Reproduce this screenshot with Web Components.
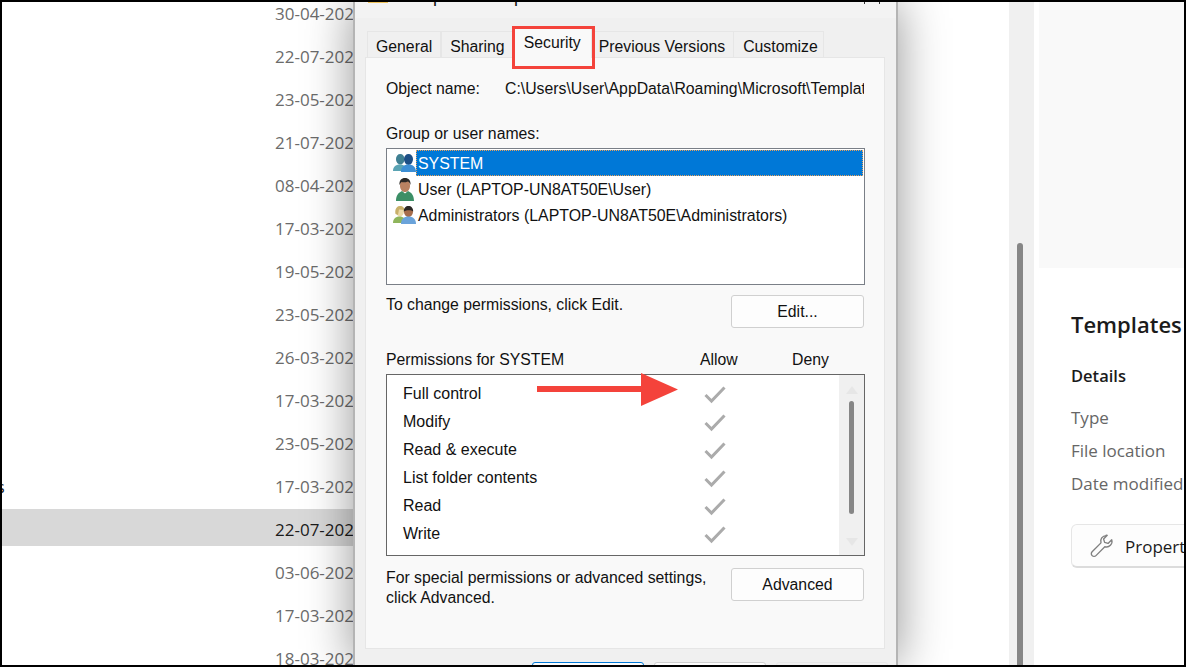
<!DOCTYPE html>
<html>
<head>
<meta charset="utf-8">
<title>Security tab</title>
<style>
  html, body { margin: 0; padding: 0; background: #000; }
</style>
</head>
<body>
<app-frame>
  <file-list slot="list"></file-list>
  <prop-dialog slot="dialog">
    <dlg-tab>General</dlg-tab>
    <dlg-tab>Sharing</dlg-tab>
    <dlg-tab selected>Security</dlg-tab>
    <dlg-tab>Previous Versions</dlg-tab>
    <dlg-tab>Customize</dlg-tab>
  </prop-dialog>
  <details-pane slot="details"></details-pane>
</app-frame>

<script>
const ICONS = {
  system: `<svg width="23" height="18" viewBox="0 0 23 18">
    <path d="M3 5c0-3 1.800-5 4.300-5s4.200 2 4.200 5-1.800 5.500-4.200 5.500S3 8 3 5z" fill="#3f7f92"/>
    <path d="M0 17c0-4 2.500-6.500 7-6.500s6 2.500 6 6.500z" fill="#5aa3b3"/>
    <path d="M11 5c0-3 2-5 4.500-5S20 2 20 5s-2 6-4.500 6S11 8 11 5z" fill="#1d4f86"/>
    <path d="M8 18c0-5 3-7.500 7.500-7.500S23 13 23 18z" fill="#3c8ed4"/></svg>`,
  user: `<svg width="20" height="23" viewBox="0 0 20 23">
    <path d="M5 7.500C5 3.500 7 1 10 1s5 2.500 5 6.500S13 14 10 14s-5-2.500-5-6.500z" fill="#b98262"/>
    <path d="M4.500 7C4 2.500 6.500 0 10 0s6 2.500 5.500 7c-.5-2-1.500-3-2.500-3.500-2 1-5.500 1-6.500.5C5.500 5 5 6 4.500 7z" fill="#2b2826"/>
    <path d="M1 23c0-5.500 2.500-8.500 6-10l3 2.500 3-2.500c3.500 1.500 6 4.500 6 10z" fill="#3c8f66"/></svg>`,
  admins: `<svg width="23" height="18" viewBox="0 0 23 18">
    <path d="M3 5c0-3 1.800-5 4-5s4 2 4 5-1.800 5.500-4 5.500S3 8 3 5z" fill="#ecd9a8"/>
    <path d="M2.500 8C1.500 3 4 0 7 0s4.500 2 4.500 4L6 3.500 5 9z" fill="#c8b06a"/>
    <path d="M0 17c0-4 2.500-6.500 6.500-6.500S13 13 13 17z" fill="#8fb55c"/>
    <path d="M11 5.500c0-3 2-5 4.500-5S20 2.500 20 5.500s-2 5.500-4.500 5.500S11 8.500 11 5.500z" fill="#a66c4a"/>
    <path d="M10.800 5.500c0-3.500 2-5.500 4.700-5.500s4.700 2 4.700 5.500c-2-1.800-6.500-1.800-9.400 0z" fill="#2b2826"/>
    <path d="M8 18c0-5 3-7.500 7.500-7.500S23 13 23 18z" fill="#6aa3da"/></svg>`
}

// top level frame, the black edge of the screenshot
class AppFrame extends HTMLElement {
  constructor() {
    super()
    this.attachShadow({ mode: 'open' })
  }
  connectedCallback() {
    this.shadowRoot.innerHTML = `
      <style>
        :host {
          display: grid;
          grid-template-columns: 351px 545px 111px 25px 1fr;
          grid-template-rows: 663px;
          box-sizing: border-box;
          width: 1186px;
          height: 667px;
          border: 2px solid #000;
          background: #fff;
          overflow: hidden;
        }
        .track { grid-column: 4; background: #f0f0f0; display: flex; justify-content: center; padding-top: 241px; box-sizing: border-box; }
        .thumb { width: 6px; height: 100%; background: #868686; border-radius: 3px 3px 0 0; margin-left: -3px; }
        .gap { background: #fff; }
        ::slotted(prop-dialog) { z-index: 2; }
      </style>
      <slot name="list"></slot>
      <slot name="dialog"></slot>
      <div class="gap"></div>
      <div class="track"><div class="thumb"></div></div>
      <slot name="details"></slot>
    `
  }
}

class FileList extends HTMLElement {
  constructor() {
    super()
    this.attachShadow({ mode: 'open' })
  }
  connectedCallback() {
    const dates = ['30-04-202', '22-07-202', '23-05-202', '21-07-202', '08-04-202', '17-03-202', '19-05-202', '23-05-202',
      '26-03-202', '17-03-202', '23-05-202', '17-03-202', '22-07-202', '03-06-202', '17-03-202', '18-03-202']
    this.shadowRoot.innerHTML = `
      <style>
        :host {
          display: block;
          overflow: hidden;
          font: 17px "Open Sans", sans-serif;
          color: #6b6b6b;
        }
        .rows { margin-top: -9px; }
        .row { display: flex; height: 37px; margin-bottom: 6px; box-sizing: border-box; padding-top: 5px; line-height: 32px; white-space: nowrap; }
        .row.sel { background: #d8d8d8; color: #1b1b1b; }
        .name { flex: 0 0 273px; color: #111; overflow: hidden; font-size: 16px; }
        .name span { margin-left: -5px; display: inline-block; }
      </style>
      <div class="rows">
        ${dates.map((d, i) => `
          <div class="row ${i === 12 ? 'sel' : ''}">
            <div class="name">${i === 11 ? '<span>s</span>' : ''}</div>
            <div>${d}</div>
          </div>`).join('')}
      </div>
    `
  }
}

class DlgTab extends HTMLElement {
  constructor() {
    super()
    this.attachShadow({ mode: 'open' })
  }
  connectedCallback() {
    this.shadowRoot.innerHTML = `
      <style>
        :host {
          display: block;
          box-sizing: border-box;
          height: 26px;
          padding: 0 8px;
          line-height: 30px;
          border: 1px solid #e6e6e6;
          border-bottom: 0;
          background: #f0f0f0;
          white-space: nowrap;
          overflow: hidden;
          color: #111;
        }
        :host(:nth-child(2)) { padding: 0 9px 0 8px; }
        :host([selected]) {
          height: 31px;
          margin: -4px 0 -1px -3px;
          background: #f9f9f9;
          padding: 0 10px 0 11px;
          line-height: 30px;
          z-index: 1;
        }
        :host(:nth-child(4)) { margin-left: -2px; }
        :host(:last-child) { margin-left: -1px; padding: 0 5px 0 9px; }
      </style>
      <slot></slot>
    `
  }
}

class DlgButton extends HTMLElement {
  constructor() {
    super()
    this.attachShadow({ mode: 'open' })
  }
  connectedCallback() {
    this.shadowRoot.innerHTML = `
      <style>
        :host {
          display: flex;
          align-items: center;
          justify-content: center;
          box-sizing: border-box;
          width: 133px;
          height: 33px;
          margin-right: 1px;
          border: 1px solid #d0d0d0;
          border-radius: 3px;
          background: #fdfdfd;
          color: #111;
        }
      </style>
      <slot></slot>
    `
  }
}

class UserRow extends HTMLElement {
  constructor() {
    super()
    this.attachShadow({ mode: 'open' })
  }
  connectedCallback() {
    const icon = ICONS[this.getAttribute('icon')]
    this.shadowRoot.innerHTML = `
      <style>
        :host { display: flex; align-items: center; height: 26px; font-size: 15.900px; }
        .ic { flex: 0 0 29px; display: flex; justify-content: center; padding-left: 6px; box-sizing: border-box; }
        .tx { flex: 1; height: 100%; line-height: 28px; padding-left: 2px; white-space: nowrap; box-sizing: border-box; }
        :host([selected]) .tx { background: #0078d7; color: #fff; outline: 1px dotted #e8a15c; outline-offset: -1px; }
      </style>
      <div class="ic">${icon}</div>
      <div class="tx"><slot></slot></div>
    `
  }
}

class PermRow extends HTMLElement {
  constructor() {
    super()
    this.attachShadow({ mode: 'open' })
  }
  connectedCallback() {
    this.shadowRoot.innerHTML = `
      <style>
        :host { display: grid; grid-template-columns: 301px 22px; height: 28px; align-items: center; padding-left: 16px; font-size: 16px; }
        svg { display: block; margin-top: 3px; }
        div { padding-top: 2px; }
      </style>
      <div><slot></slot></div>
      <svg width="22" height="18" viewBox="0 0 22 18"><path d="M1.500 9l6 6L20.500 1.500" fill="none" stroke="#ababab" stroke-width="3"/></svg>
    `
  }
}

class PropDialog extends HTMLElement {
  constructor() {
    super()
    this.attachShadow({ mode: 'open' })
  }
  connectedCallback() {
    this.shadowRoot.innerHTML = `
      <style>
        :host {
          display: flex;
          flex-direction: column;
          box-sizing: border-box;
          border-left: 2px solid #b4b4b4;
          border-right: 2px solid #b4b4b4;
          background: #f0f0f0;
          box-shadow: 0 0 45px rgba(0,0,0,.42);
          font: 15.8px "Liberation Sans", sans-serif;
          color: #111;
          position: relative;
          overflow: hidden;
        }
        .title { flex: 0 0 16px; background: #f3f3f3; overflow: hidden; display: flex; padding-left: 13px; gap: 11px; margin-bottom: 13px; position: relative; }
        .title b { flex: 0 0 20px; height: 1px; background: #f0c35a; }
        .title span { margin-top: -15px; font-size: 18px; line-height: 18px; white-space: nowrap; }
        .close { position: absolute; left: 509px; top: 0; width: 14px; height: 2px; border-left: 1px solid #333; border-right: 1px solid #333; }
        .tabs { display: flex; flex: 0 0 26px; padding-left: 12px; align-items: flex-start; position: relative; }
        .panel {
          flex: 0 0 592px;
          margin: 0 11px 0 10px;
          box-sizing: border-box;
          border: 1px solid #e6e6e6;
          background: #f9f9f9;
          padding: 21px 19px 0 20px;
        }
        .obj { display: flex; height: 20px; margin: 0 1px -2px 0; line-height: 20px; white-space: nowrap; overflow: hidden; }
        .obj div:first-child { flex: 0 0 119px; }
        .label { height: 18px; line-height: 20px; margin-top: 27px; }
        .users { margin-top: 6px; height: 137px; box-sizing: border-box; border: 1px solid #7a7f87; background: #fff; padding: 1px 1px 0 0; }
        .edit { display: flex; justify-content: space-between; margin-top: 10px; height: 33px; line-height: 20px; }
        .perm-head { display: grid; grid-template-columns: 314px 92px auto; margin-top: 22px; height: 18px; line-height: 20px; }
        .perms { display: flex; margin-top: 6px; height: 182px; box-sizing: border-box; border: 1px solid #666; background: #fff; }
        .perm-rows { flex: 1; padding-top: 4px; }
        .sb { flex: 0 0 25px; background: #f0f0f0; display: flex; flex-direction: column; align-items: center; padding-top: 11px; box-sizing: border-box; }
        .sb i { width: 0; height: 0; border-left: 6px solid transparent; border-right: 6px solid transparent; }
        .sb .up { border-bottom: 8px solid #e6e6e6; }
        .sb .dn { border-top: 8px solid #e6e6e6; margin-top: 24px; }
        .sb .th { width: 5px; height: 113px; margin-top: 7px; background: #868686; border-radius: 3px; }
        .adv { display: flex; justify-content: space-between; margin-top: 12px; line-height: 20px; }
        .adv p { margin: 0; }
        .foot { display: flex; flex: 0 0 33px; gap: 10px; padding: 13px 0 0 177px; box-sizing: border-box; }
        .foot div { width: 112px; height: 20px; box-sizing: border-box; background: #fdfdfd; border: 1px solid #d0d0d0; border-radius: 3px; }
        .foot div:first-child { border: 1px solid #0078d7; }
        .foot div:last-child { border-color: #e8e8e8; background: #f0f0f0; }
        .red { position: absolute; left: 157px; top: 24px; width: 83px; height: 43px; box-sizing: border-box; border: 3px solid #f4433b; z-index: 3; }
        .arrow { position: absolute; left: 182px; top: 371px; z-index: 3; }
      </style>
      <div class="title"><b></b><span>Templates Properties</span><div class="close"></div></div>
      <div class="tabs"><slot></slot></div>
      <div class="panel">
        <div class="obj"><div>Object name:</div><div>C:\\Users\\User\\AppData\\Roaming\\Microsoft\\Templates</div></div>
        <div class="label">Group or user names:</div>
        <div class="users">
          <user-row icon="system" selected>SYSTEM</user-row>
          <user-row icon="user">User (LAPTOP-UN8AT50E\\User)</user-row>
          <user-row icon="admins">Administrators (LAPTOP-UN8AT50E\\Administrators)</user-row>
        </div>
        <div class="edit"><div>To change permissions, click Edit.</div><dlg-button>Edit...</dlg-button></div>
        <div class="perm-head"><div>Permissions for SYSTEM</div><div>Allow</div><div>Deny</div></div>
        <div class="perms">
          <div class="perm-rows">
            <perm-row>Full control</perm-row>
            <perm-row>Modify</perm-row>
            <perm-row>Read &amp; execute</perm-row>
            <perm-row>List folder contents</perm-row>
            <perm-row>Read</perm-row>
            <perm-row>Write</perm-row>
          </div>
          <div class="sb"><i class="up"></i><div class="th"></div><i class="dn"></i></div>
        </div>
        <div class="adv">
          <p>For special permissions or advanced settings,<br>click Advanced.</p>
          <dlg-button>Advanced</dlg-button>
        </div>
      </div>
      <div class="foot"><div></div><div></div><div></div></div>
      <div class="red"></div>
      <svg class="arrow" width="145" height="36" viewBox="0 0 145 36"><path d="M0 13h104V0l37 16.500-37 16.500V19H0z" fill="#f4433b"/></svg>
    `
  }
}

class DetailsPane extends HTMLElement {
  constructor() {
    super()
    this.attachShadow({ mode: 'open' })
  }
  connectedCallback() {
    this.shadowRoot.innerHTML = `
      <style>
        :host { display: block; overflow: hidden; font: 17px "Open Sans", sans-serif; color: #666; background: #fff; }
        .top { height: 266px; margin-left: 5px; background: #f9f9f9; }
        .body { padding: 40px 0 0 37px; white-space: nowrap; }
        h2 { margin: 0; font: 600 22px/32px "Open Sans", sans-serif; color: #1b1b1b; }
        h3 { margin: 24px 0 0; font: 600 16.500px/24px "Open Sans", sans-serif; color: #1b1b1b; }
        .k { height: 33px; line-height: 33px; }
        .k:first-of-type { margin-top: 13px; }
        .btn { display: flex; align-items: center; gap: 11px; width: 140px; height: 44px; margin-top: 24px; box-sizing: border-box; padding-left: 17px; border: 1px solid #e6e6e6; border-bottom: 2px solid #dcdcdc; border-radius: 6px; background: #fdfdfd; color: #1b1b1b; font-size: 17px; }
        .btn span { padding-top: 2px; }
      </style>
      <div class="top"></div>
      <div class="body">
        <h2>Templates</h2>
        <h3>Details</h3>
        <div class="k">Type</div>
        <div class="k">File location</div>
        <div class="k">Date modified</div>
        <div class="btn">
          <svg width="25" height="25" viewBox="0 0 24 24"><path d="M16.500 2.500a5.300 5.300 0 0 0-5 7L3 18a2.600 2.600 0 0 0 3.700 3.700l8.500-8.500a5.300 5.300 0 0 0 6.600-6.700l-3.500 3.500-3.300-1-1-3.300 3.500-3.500a5.300 5.300 0 0 0-1-.2z" fill="none" stroke="#808080" stroke-width="1.300" stroke-linejoin="round"/></svg>
          <span>Properties</span>
        </div>
      </div>
    `
  }
}

customElements.define('app-frame', AppFrame)
customElements.define('file-list', FileList)
customElements.define('dlg-tab', DlgTab)
customElements.define('dlg-button', DlgButton)
customElements.define('user-row', UserRow)
customElements.define('perm-row', PermRow)
customElements.define('prop-dialog', PropDialog)
customElements.define('details-pane', DetailsPane)
</script>
</body>
</html>
